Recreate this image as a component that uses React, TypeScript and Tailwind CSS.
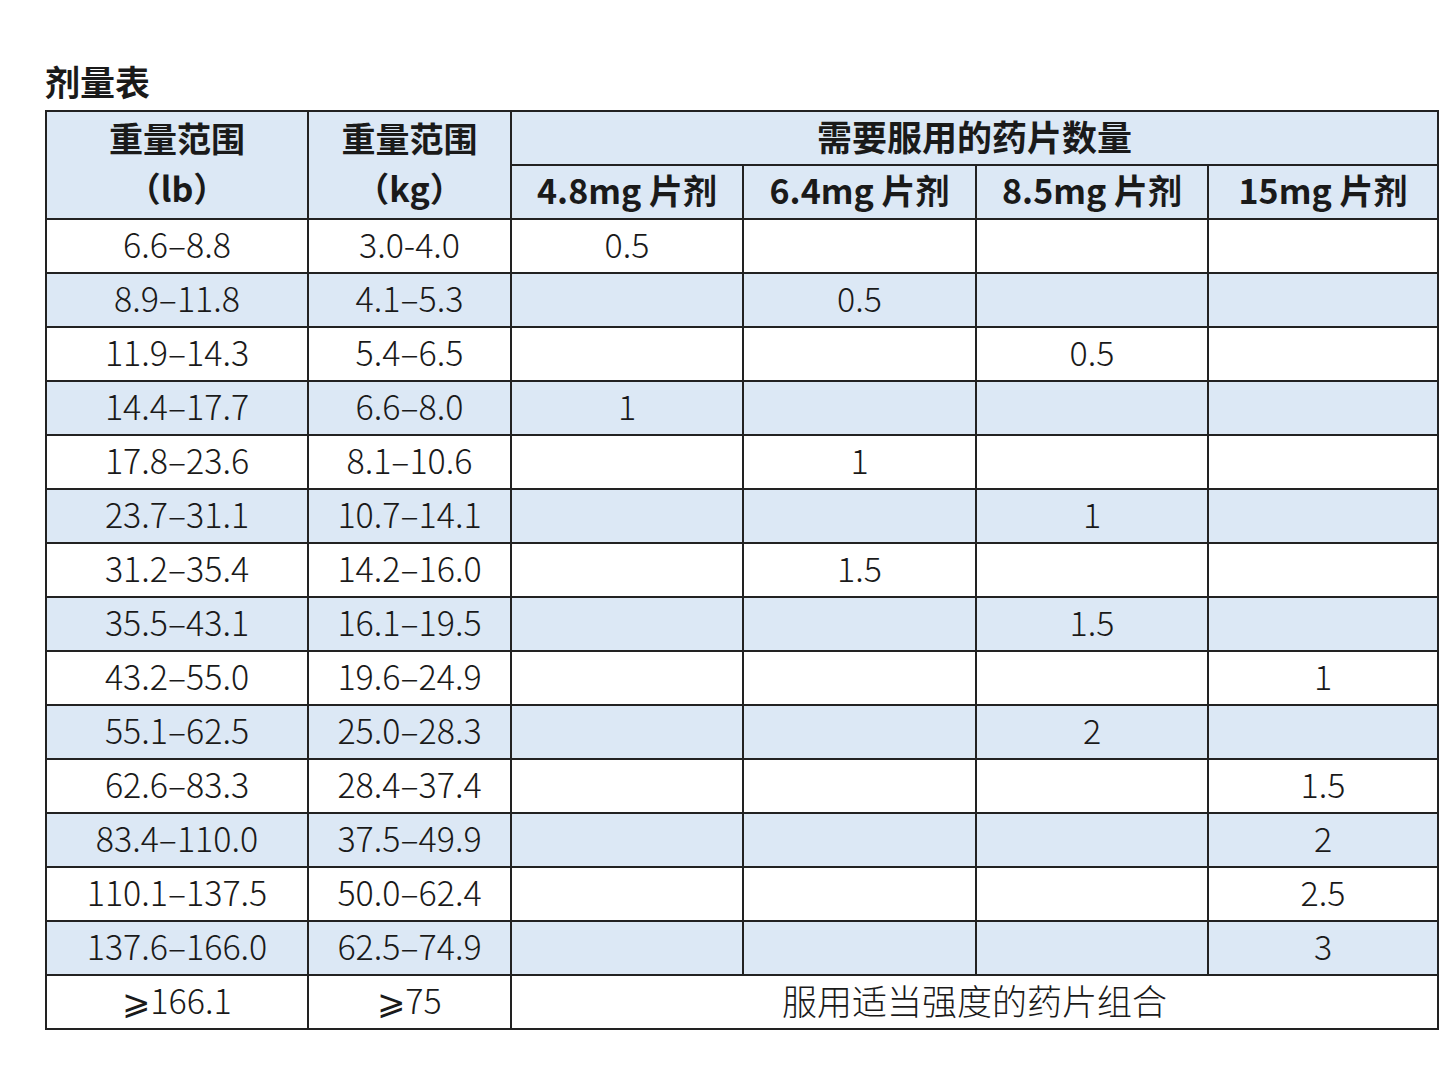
const ROWS: [string, string, string, string, string, string][] = [
  ["6.6–8.8", "3.0-4.0", "0.5", "", "", ""],
  ["8.9–11.8", "4.1–5.3", "", "0.5", "", ""],
  ["11.9–14.3", "5.4–6.5", "", "", "0.5", ""],
  ["14.4–17.7", "6.6–8.0", "1", "", "", ""],
  ["17.8–23.6", "8.1–10.6", "", "1", "", ""],
  ["23.7–31.1", "10.7–14.1", "", "", "1", ""],
  ["31.2–35.4", "14.2–16.0", "", "1.5", "", ""],
  ["35.5–43.1", "16.1–19.5", "", "", "1.5", ""],
  ["43.2–55.0", "19.6–24.9", "", "", "", "1"],
  ["55.1–62.5", "25.0–28.3", "", "", "2", ""],
  ["62.6–83.3", "28.4–37.4", "", "", "", "1.5"],
  ["83.4–110.0", "37.5–49.9", "", "", "", "2"],
  ["110.1–137.5", "50.0–62.4", "", "", "", "2.5"],
  ["137.6–166.0", "62.5–74.9", "", "", "", "3"],
];

const cell = "border-2 border-[#222] text-center align-middle px-0 pt-0 pb-[5px] leading-[40px]";

export default function App() {
  return (
    <div
      className="w-[1440px] h-[1082px] bg-white overflow-hidden pl-[45px] pt-[60px] text-[#1a1a1a]"
      style={{ fontFamily: '"Noto Sans CJK SC", "Noto Sans", sans-serif' }}
    >
      <h2 className="text-[35px] font-bold leading-[42px] mb-[8px]">剂量表</h2>
      <table className="table-fixed border-collapse w-[1392px]">
        <colgroup>
          <col className="w-[262px]" />
          <col className="w-[203px]" />
          <col className="w-[232px]" />
          <col className="w-[233px]" />
          <col className="w-[232px]" />
          <col className="w-[230px]" />
        </colgroup>
        <thead className="bg-[#dce8f5] font-bold text-[34px]">
          <tr className="h-[54px]">
            <th rowSpan={2} className={`${cell} !leading-[50px]`}>
              重量范围
              <br />
              （lb）
            </th>
            <th rowSpan={2} className={`${cell} !leading-[50px]`}>
              重量范围
              <br />
              （kg）
            </th>
            <th colSpan={4} className={`${cell} text-[35px]`}>
              需要服用的药片数量
            </th>
          </tr>
          <tr className="h-[54px]">
            <th className={cell}>4.8mg 片剂</th>
            <th className={cell}>6.4mg 片剂</th>
            <th className={cell}>8.5mg 片剂</th>
            <th className={cell}>15mg 片剂</th>
          </tr>
        </thead>
        <tbody className="text-[34px] font-light">
          {ROWS.map((r, i) => (
            <tr key={i} className={`h-[54px] ${i % 2 === 1 ? "bg-[#dce8f5]" : "bg-white"}`}>
              {r.map((v, j) => (
                <td key={j} className={cell}>
                  {v}
                </td>
              ))}
            </tr>
          ))}
          <tr className="h-[54px] bg-white">
            <td className={cell}>⩾166.1</td>
            <td className={cell}>⩾75</td>
            <td colSpan={4} className={`${cell} text-[35px]`}>
              服用适当强度的药片组合
            </td>
          </tr>
        </tbody>
      </table>
    </div>
  );
}
